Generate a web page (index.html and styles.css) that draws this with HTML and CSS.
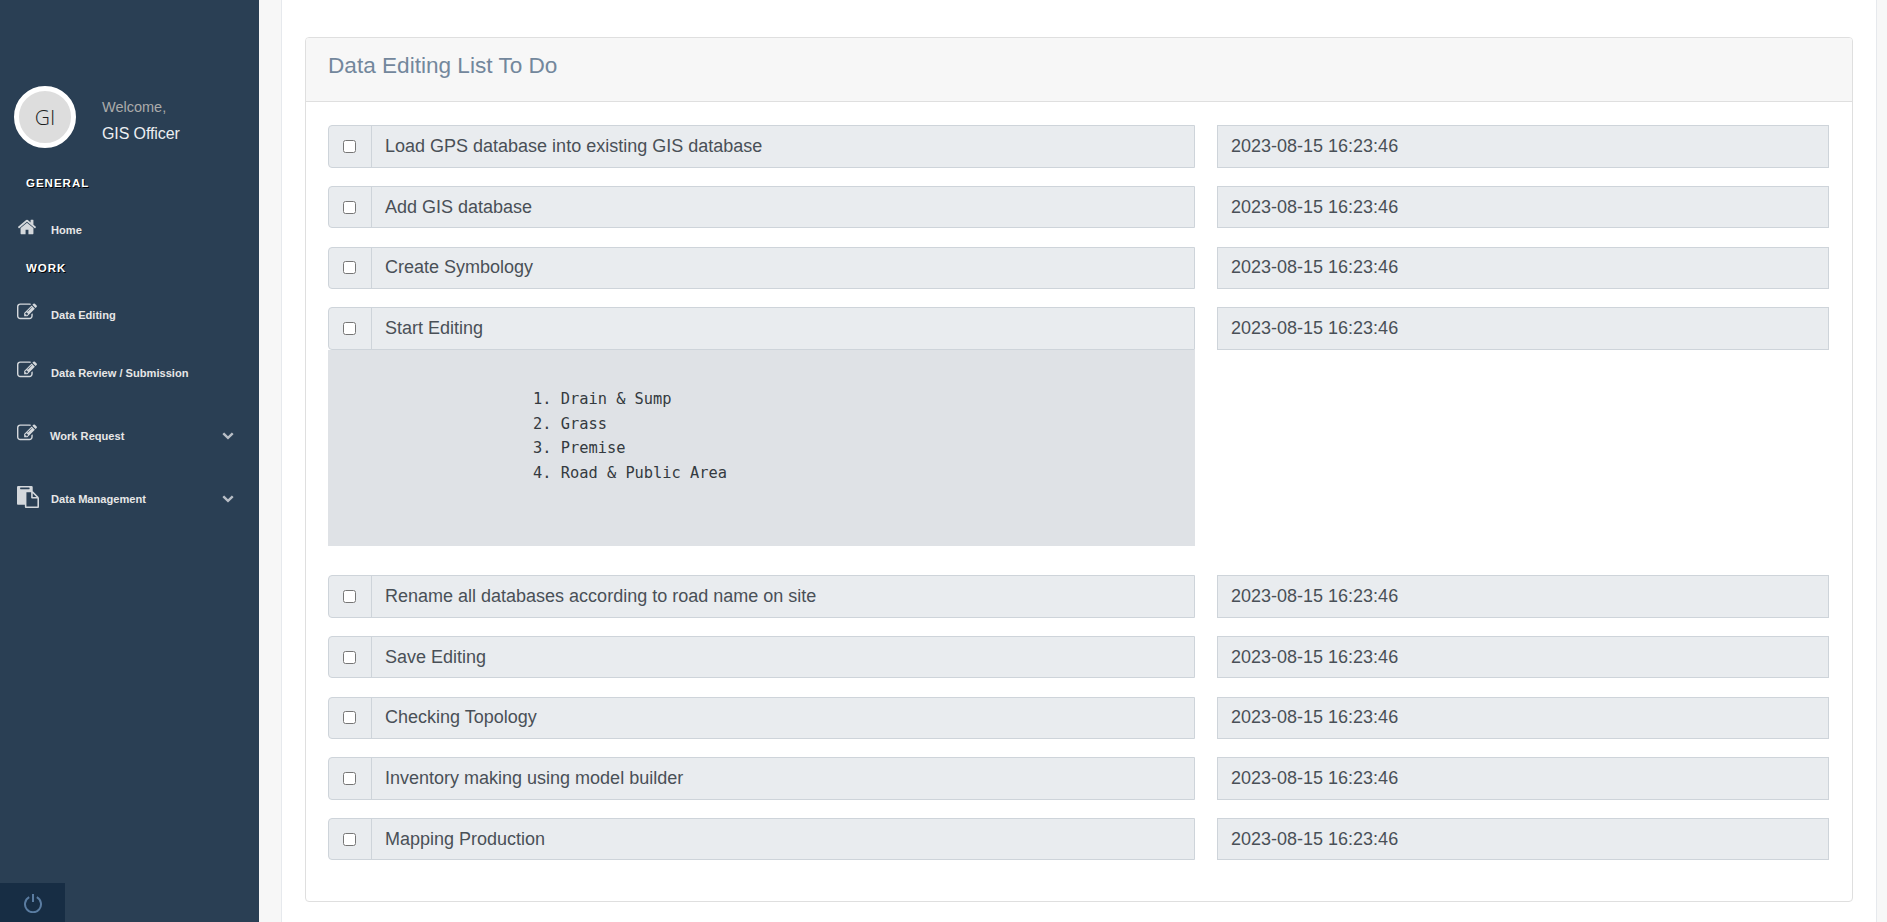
FILE: index.html
```html
<!DOCTYPE html>
<html lang="en">
<head>
<meta charset="utf-8">
<title>Data Editing List To Do</title>
<link rel="stylesheet" href="styles.css">
</head>
<body>
<aside class="sidebar">
  <div class="profile">
    <div class="avatar">GI</div>
    <div class="profile-info">
      <span class="welcome">Welcome,</span>
      <span class="username">GIS Officer</span>
    </div>
  </div>
  <h3 class="section section-general">GENERAL</h3>
  <a class="nav-item nav-home">
    <svg class="nav-icon icon-home" viewBox="0 0 1792 1792"><path d="M1472 992v480q0 26-19 45t-45 19h-384v-384h-256v384h-384q-26 0-45-19t-19-45v-480q0-1 .5-3t.5-3l575-474 575 474q1 2 1 6zm223-69l-62 74q-8 9-21 11h-3q-13 0-21-7l-692-577-692 577q-12 8-24 7-13-2-21-11l-62-74q-8-10-7-23.500t11-21.500l719-599q32-26 76-26t76 26l244 204v-195q0-14 9-23t23-9h192q14 0 23 9t9 23v408l219 182q10 8 11 21.500t-7 23.500z"/></svg>
    <span class="nav-label">Home</span>
  </a>
  <h3 class="section section-work">WORK</h3>
  <a class="nav-item nav-editing">
    <svg class="nav-icon" viewBox="0 0 1792 1792"><path d="M888 1184l116-116-152-152-116 116v56h96v96h56zm440-720q-16-16-33 1l-350 350q-17 17-1 33t33-1l350-350q17-17 1-33zm80 594v190q0 119-84.500 203.500t-203.500 84.500h-832q-119 0-203.500-84.500t-84.500-203.500v-832q0-119 84.500-203.500t203.500-84.500h832q63 0 117 25 15 7 18 23 3 17-9 29l-49 49q-14 14-32 8-23-6-45-6h-832q-66 0-113 47t-47 113v832q0 66 47 113t113 47h832q66 0 113-47t47-113v-126q0-13 9-22l64-64q15-15 35-7t20 29zm-96-738l288 288-672 672h-288v-288zm444 132l-92 92-288-288 92-92q28-28 68-28t68 28l152 152q28 28 28 68t-28 68z"/></svg>
    <span class="nav-label">Data Editing</span>
  </a>
  <a class="nav-item nav-review">
    <svg class="nav-icon" viewBox="0 0 1792 1792"><path d="M888 1184l116-116-152-152-116 116v56h96v96h56zm440-720q-16-16-33 1l-350 350q-17 17-1 33t33-1l350-350q17-17 1-33zm80 594v190q0 119-84.500 203.500t-203.500 84.500h-832q-119 0-203.500-84.500t-84.500-203.500v-832q0-119 84.500-203.500t203.500-84.500h832q63 0 117 25 15 7 18 23 3 17-9 29l-49 49q-14 14-32 8-23-6-45-6h-832q-66 0-113 47t-47 113v832q0 66 47 113t113 47h832q66 0 113-47t47-113v-126q0-13 9-22l64-64q15-15 35-7t20 29zm-96-738l288 288-672 672h-288v-288zm444 132l-92 92-288-288 92-92q28-28 68-28t68 28l152 152q28 28 28 68t-28 68z"/></svg>
    <span class="nav-label">Data Review / Submission</span>
  </a>
  <a class="nav-item nav-request">
    <svg class="nav-icon" viewBox="0 0 1792 1792"><path d="M888 1184l116-116-152-152-116 116v56h96v96h56zm440-720q-16-16-33 1l-350 350q-17 17-1 33t33-1l350-350q17-17 1-33zm80 594v190q0 119-84.500 203.500t-203.500 84.500h-832q-119 0-203.500-84.500t-84.500-203.500v-832q0-119 84.500-203.500t203.500-84.500h832q63 0 117 25 15 7 18 23 3 17-9 29l-49 49q-14 14-32 8-23-6-45-6h-832q-66 0-113 47t-47 113v832q0 66 47 113t113 47h832q66 0 113-47t47-113v-126q0-13 9-22l64-64q15-15 35-7t20 29zm-96-738l288 288-672 672h-288v-288zm444 132l-92 92-288-288 92-92q28-28 68-28t68 28l152 152q28 28 28 68t-28 68z"/></svg>
    <span class="nav-label nav-label-tight">Work Request</span>
    <svg class="chevron" viewBox="0 0 1792 1792"><path d="M1683 808l-742 741q-19 19-45 19t-45-19l-742-741q-19-19-19-45.500t19-45.500l166-165q19-19 45-19t45 19l531 531 531-531q19-19 45-19t45 19l166 165q19 19 19 45.500t-19 45.500z"/></svg>
  </a>
  <a class="nav-item nav-management">
    <svg class="nav-icon icon-clipboard" viewBox="0 0 1792 1792"><path d="M768 1664h896v-640h-416q-40 0-68-28t-28-68v-416h-384v1152zm256-1440v-64q0-13-9.500-22.500t-22.500-9.500h-704q-13 0-22.500 9.500t-9.500 22.500v64q0 13 9.500 22.500t22.500 9.500h704q13 0 22.500-9.500t9.500-22.500zm256 672h299l-299-299v299zm512 128v672q0 40-28 68t-68 28h-960q-40 0-68-28t-28-68v-160h-544q-40 0-68-28t-28-68v-1344q0-40 28-68t68-28h1088q40 0 68 28t28 68v328q21 13 36 28l408 408q28 28 48 76t20 88z"/></svg>
    <span class="nav-label">Data Management</span>
    <svg class="chevron" viewBox="0 0 1792 1792"><path d="M1683 808l-742 741q-19 19-45 19t-45-19l-742-741q-19-19-19-45.500t19-45.500l166-165q19-19 45-19t45 19l531 531 531-531q19-19 45-19t45 19l166 165q19 19 19 45.500t-19 45.500z"/></svg>
  </a>
  <div class="sidebar-footer">
    <a class="logout">
      <svg class="power" viewBox="0 0 20 20"><path d="M6.200 4.200a8 8 0 1 0 7.600 0"/><path d="M10 1v8"/></svg>
    </a>
  </div>
</aside>
<main class="main">
  <section class="panel">
    <div class="card">
      <header class="card-header">Data Editing List To Do</header>
      <div class="card-body">
        <div class="task">
          <div class="task-main"><div class="input-group"><span class="addon"><input type="checkbox"></span><span class="field">Load GPS database into existing GIS database</span></div></div>
          <div class="date">2023-08-15 16:23:46</div>
        </div>
        <div class="task">
          <div class="task-main"><div class="input-group"><span class="addon"><input type="checkbox"></span><span class="field">Add GIS database</span></div></div>
          <div class="date">2023-08-15 16:23:46</div>
        </div>
        <div class="task">
          <div class="task-main"><div class="input-group"><span class="addon"><input type="checkbox"></span><span class="field">Create Symbology</span></div></div>
          <div class="date">2023-08-15 16:23:46</div>
        </div>
        <div class="task task-open">
          <div class="task-main">
            <div class="input-group"><span class="addon"><input type="checkbox"></span><span class="field">Start Editing</span></div>
            <pre class="notes">1. Drain &amp; Sump
2. Grass
3. Premise
4. Road &amp; Public Area</pre>
          </div>
          <div class="date">2023-08-15 16:23:46</div>
        </div>
        <div class="task">
          <div class="task-main"><div class="input-group"><span class="addon"><input type="checkbox"></span><span class="field">Rename all databases according to road name on site</span></div></div>
          <div class="date">2023-08-15 16:23:46</div>
        </div>
        <div class="task">
          <div class="task-main"><div class="input-group"><span class="addon"><input type="checkbox"></span><span class="field">Save Editing</span></div></div>
          <div class="date">2023-08-15 16:23:46</div>
        </div>
        <div class="task">
          <div class="task-main"><div class="input-group"><span class="addon"><input type="checkbox"></span><span class="field">Checking Topology</span></div></div>
          <div class="date">2023-08-15 16:23:46</div>
        </div>
        <div class="task">
          <div class="task-main"><div class="input-group"><span class="addon"><input type="checkbox"></span><span class="field">Inventory making using model builder</span></div></div>
          <div class="date">2023-08-15 16:23:46</div>
        </div>
        <div class="task">
          <div class="task-main"><div class="input-group"><span class="addon"><input type="checkbox"></span><span class="field">Mapping Production</span></div></div>
          <div class="date">2023-08-15 16:23:46</div>
        </div>
      </div>
    </div>
  </section>
</main>
</body>
</html>
```
FILE: styles.css
```css
* { box-sizing: border-box; }
html, body { height: 100%; }
body {
  margin: 0;
  display: flex;
  height: 922px;
  overflow: hidden;
  background: #f7f7f7;
  font-family: "Liberation Sans", Arial, sans-serif;
  color: #495057;
}

/* Sidebar */
.sidebar {
  flex: 0 0 259px;
  display: flex;
  flex-direction: column;
  background: #2a3f54;
  color: #e7e7e7;
}
.profile {
  display: flex;
  align-items: flex-start;
  padding: 86px 0 0 14px;
  height: 148px;
}
.avatar {
  width: 62px;
  height: 62px;
  flex: none;
  display: flex;
  align-items: center;
  justify-content: center;
  border: 5px solid #fff;
  border-radius: 50%;
  background: #dddddd;
  color: #1f1f1f;
  font-family: "Open Sans", sans-serif;
  font-weight: 300;
  font-size: 21px;
}
.profile-info {
  display: flex;
  flex-direction: column;
  margin-left: 26px;
  padding-top: 11px;
}
.welcome { font-size: 14.500px; line-height: 20px; color: #ababab; }
.username { font-size: 16px; line-height: 20px; margin-top: 7px; color: #eceff2; letter-spacing: -0.1px; }
.section {
  margin: 0;
  padding-left: 26px;
  font-size: 11.500px;
  line-height: 14px;
  font-weight: 700;
  letter-spacing: 1px;
  color: #fff;
  text-shadow: 1px 1px #000;
}
.section-general { margin-top: 28px; }
.section-work { margin-top: 19px; }
.nav-item {
  position: relative;
  display: flex;
  align-items: center;
  padding-left: 17px;
  height: 24px;
  color: #e7e7e7;
}
.nav-home { margin-top: 28px; }
.nav-editing { margin-top: 28px; }
.nav-review { margin-top: 34px; }
.nav-request { margin-top: 39px; }
.nav-management { margin-top: 39px; }
.nav-icon {
  width: 20px;
  height: 20px;
  flex: none;
  fill: #d4d8dc;
  margin-top: -7px;
}
.icon-home { margin-top: -6px; }
.icon-clipboard { width: 22px; height: 22px; margin-top: -5px; margin-right: -2px; }
.nav-label {
  margin-left: 14px;
  font-size: 11.100px;
  font-weight: 700;
  white-space: nowrap;
  color: #e7e7e7;
}
.nav-label-tight { margin-left: 13px; }
.chevron {
  position: absolute;
  left: 221.500px;
  top: 5px;
  width: 12px;
  height: 12px;
  fill: #b8bec6;
}
.sidebar-footer { margin-top: auto; height: 39px; }
.logout {
  display: flex;
  align-items: center;
  justify-content: center;
  width: 65px;
  height: 39px;
  background: #172d44;
}
.power {
  width: 20px;
  height: 20px;
  fill: none;
  stroke: #5a7ca1;
  stroke-width: 2;
}

/* Main */
.main {
  flex: 1;
  min-width: 0;
  padding: 0 10px 0 22px;
}
.panel {
  height: 100%;
  padding: 37px 23px 0 23px;
  background: #fff;
  border-left: 1px solid #e6e9ed;
  border-right: 1px solid #e6e9ed;
}
.card {
  border: 1px solid #dfdfdf;
  border-radius: 4px;
  height: 865px;
  background: #fff;
}
.card-header {
  height: 64px;
  padding: 0 22px 7px;
  display: flex;
  align-items: center;
  background: #f7f7f7;
  border-bottom: 1px solid #dfdfdf;
  border-radius: 3px 3px 0 0;
  color: #73879c;
  font-size: 22.600px;
}
.card-body { padding: 23.300px 23px 0 22px; }
.task {
  display: grid;
  grid-template-columns: 867fr 612fr;
  column-gap: 22px;
  align-items: start;
  margin-bottom: 18.300px;
}
.task-open { margin-bottom: 29px; }
.input-group {
  display: flex;
  height: 42.400px;
  border: 1px solid #ced4da;
  border-radius: 4px 0 0 4px;
  background: #e9ecef;
}
.addon {
  flex: 0 0 43px;
  display: flex;
  align-items: center;
  justify-content: center;
  padding-right: 1px;
  border-right: 1px solid #ced4da;
}
.addon input { margin: 0; width: 13px; height: 13px; }
.field {
  display: flex;
  align-items: center;
  padding-left: 13px;
  font-size: 18px;
  color: #495057;
}
.date {
  display: flex;
  align-items: center;
  height: 42.400px;
  padding-left: 13px;
  border: 1px solid #ced4da;
  background: #e9ecef;
  font-size: 18px;
  color: #495057;
}
.notes {
  margin: 0;
  height: 196.600px;
  padding: 37.200px 0 0 205px;
  background: #dfe2e6;
  font-family: "DejaVu Sans Mono", monospace;
  font-size: 15.350px;
  line-height: 24.700px;
  color: #343a40;
}
```
